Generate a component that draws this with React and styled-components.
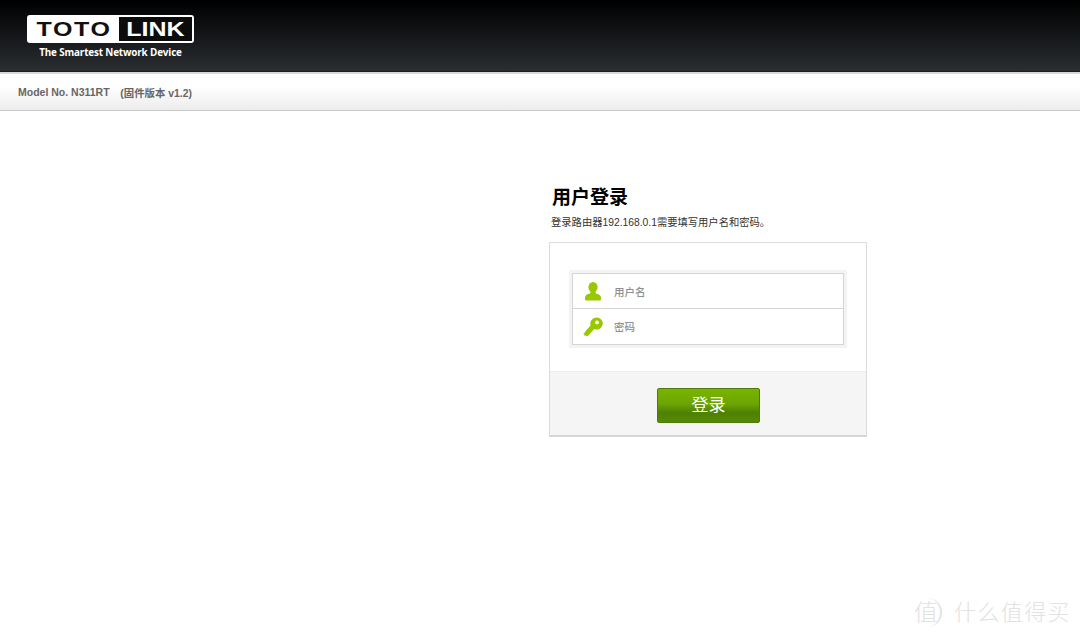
import React from "react";
import styled, { createGlobalStyle } from "styled-components";

const Global = createGlobalStyle`
  html, body { margin: 0; padding: 0; background: #fff; }
  body { width: 1080px; height: 639px; overflow: hidden; font-family: "Liberation Sans", "Noto Sans CJK SC", sans-serif; }
`;
const Page = styled.div`
  position: relative; width: 1080px; height: 639px; display: flex; flex-direction: column; background: #fff;
`;
const Header = styled.header`
  height: 72px; padding: 15px 0 0 27px; box-sizing: border-box;
  background: linear-gradient(#000 0%, #0d0f11 35%, #2b2e31 100%);
  border-bottom: 1px solid #1c1e20;
`;
const Logo = styled.div`
  width: 167px; display: flex; flex-direction: column; align-items: center;
`;
const LogoPlate = styled.div`
  width: 167px; height: 28px; box-sizing: border-box; padding: 2px; background: #fff; border-radius: 3px;
  display: flex; align-items: stretch; justify-content: flex-end; gap: 8px;
`;
const LogoWord = styled.span`
  display: flex; align-items: center; justify-content: center; width: ${p => p.$width}px;
  color: ${p => (p.$inverse ? "#fff" : "#111")}; background: ${p => (p.$inverse ? "#0c0c0c" : "transparent")};
`;
const LogoLetters = styled.span`
  display: inline-block; font: bold 20px/24px "Liberation Sans", sans-serif;
  letter-spacing: ${p => p.$spacing}px; transform: scaleX(1.25);
`;
const Tagline = styled.div`
  margin-top: 3px; color: #fff; font: bold 9.9px/13px "Open Sans", "Liberation Sans", sans-serif; white-space: nowrap; letter-spacing: -0.15px;
`;
const SubBar = styled.div`
  height: 39px; box-sizing: border-box; padding: 0 0 0 18px; display: flex; align-items: center;
  border-top: 2px solid #d8d8d8; border-bottom: 1px solid #c9c9c9;
  background: linear-gradient(#fff 35%, #ececec 100%);
  color: #666; font-size: 10.5px; font-weight: bold; white-space: pre;
`;
const Firmware = styled.span`
  font-size: 10.4px; margin-left: -1px;
`;
const Main = styled.main`
  padding: 75px 0 0 549px;
`;
const Title = styled.h1`
  margin: 0 0 0 3px; font-size: 19px; line-height: 24px; font-weight: bold; color: #000;
`;
const Desc = styled.p`
  margin: 6px 0 12px 2px; font-size: 10.3px; line-height: 14px; color: #333;
`;
const Card = styled.section`
  width: 318px; height: 195px; box-sizing: border-box; display: flex; flex-direction: column;
  border: 1px solid #dcdcdc; border-bottom: 2px solid #d6d6d6;
`;
const CardBody = styled.div`
  flex: 1; padding: 27px 19px 0;
`;
const FieldGroup = styled.div`
  width: 278px; box-sizing: border-box; border: 3px solid #f3f3f3;
`;
const Fields = styled.div`
  border: 1px solid #d5d5d5;
`;
const Field = styled.div`
  height: ${p => (p.$first ? 34 : 35)}px; display: flex; align-items: center; padding-left: 10px;
  border-top: ${p => (p.$first ? "none" : "1px solid #d5d5d5")};
`;
const IconSlot = styled.span`
  width: 20px; height: 20px; display: block; margin-right: 11px; flex: none;
`;
const FieldLabel = styled.span`
  font-size: 10.5px; color: #909090; font-weight: 500;
`;
const CardFooter = styled.div`
  height: 64px; box-sizing: border-box; background: #f5f5f5; border-top: 1px solid #ececec;
  display: flex; justify-content: center; align-items: flex-start; padding: 16px 0 0 1px;
`;
const LoginButton = styled.button`
  width: 103px; height: 35px; padding: 0; border: 1px solid #4d7a08; border-radius: 2px;
  background: linear-gradient(#78b400 0%, #6da503 45%, #4e8003 72%, #558a04 100%);
  color: #fff; font: 17px/30px "Liberation Sans", "Noto Sans CJK SC", sans-serif;
`;
const Watermark = styled.div`
  position: absolute; right: 9px; top: 598px; display: flex; align-items: center; gap: 12px;
  color: #e2e2e2; font-size: 22px; font-weight: 300; line-height: 29px; letter-spacing: 1.4px;
`;
const WatermarkBadge = styled.span`
  display: inline-flex; align-items: center; justify-content: center; width: 30px; height: 29px;
  font-size: 24px; letter-spacing: 0; border-right: 2px solid #e2e2e2; border-radius: 0 15px 15px 0; box-sizing: border-box;
`;

const UserIcon = () => (
  <svg viewBox="0 0 20 20" width="20" height="20" style={{ display: "block" }}>
    <ellipse cx="10" cy="6.2" rx="4.6" ry="5.2" fill="#98c800" />
    <path d="M7.6 10.5 L12.4 10.5 L12.8 12.6 C15.6 13.3 17.8 14.2 18 16.5 L18 18.2 Q18 19.4 16.6 19.4 L3.4 19.4 Q2 19.4 2 18.2 L2 16.5 C2.2 14.2 4.4 13.3 7.2 12.6 Z" fill="#98c800" />
  </svg>
);
const KeyIcon = () => (
  <svg viewBox="0 0 20 20" width="20" height="20" style={{ display: "block" }}>
    <path fillRule="evenodd" d="M13.2 0.6 A6 6 0 1 1 11.2 12 L5.6 18.3 L3.8 19.6 L2.9 18.4 L1.6 18.9 L1.3 17.3 L0.2 16.4 L2 15.6 L2.6 14 L7.6 8.4 A6 6 0 0 1 13.2 0.6 Z M14 3.5 A1.9 1.9 0 1 0 14 7.3 A1.9 1.9 0 1 0 14 3.5 Z" fill="#98c800" />
  </svg>
);

export default function App() {
  return (
    <Page>
      <Global />
      <Header>
        <Logo>
          <LogoPlate>
            <LogoWord $width={74}><LogoLetters $spacing={1.3}>TOTO</LogoLetters></LogoWord>
            <LogoWord $inverse $width={73}><LogoLetters $spacing={0}>LINK</LogoLetters></LogoWord>
          </LogoPlate>
          <Tagline>The Smartest Network Device</Tagline>
        </Logo>
      </Header>
      <SubBar>Model No. N311RT    <Firmware>(固件版本 v1.2)</Firmware></SubBar>
      <Main>
        <Title>用户登录</Title>
        <Desc>登录路由器192.168.0.1需要填写用户名和密码。</Desc>
        <Card>
          <CardBody>
            <FieldGroup>
              <Fields>
                <Field $first>
                  <IconSlot><UserIcon /></IconSlot>
                  <FieldLabel>用户名</FieldLabel>
                </Field>
                <Field>
                  <IconSlot><KeyIcon /></IconSlot>
                  <FieldLabel>密码</FieldLabel>
                </Field>
              </Fields>
            </FieldGroup>
          </CardBody>
          <CardFooter>
            <LoginButton type="button">登录</LoginButton>
          </CardFooter>
        </Card>
      </Main>
      <Watermark>
        <WatermarkBadge>值</WatermarkBadge>
        <span>什么值得买</span>
      </Watermark>
    </Page>
  );
}
